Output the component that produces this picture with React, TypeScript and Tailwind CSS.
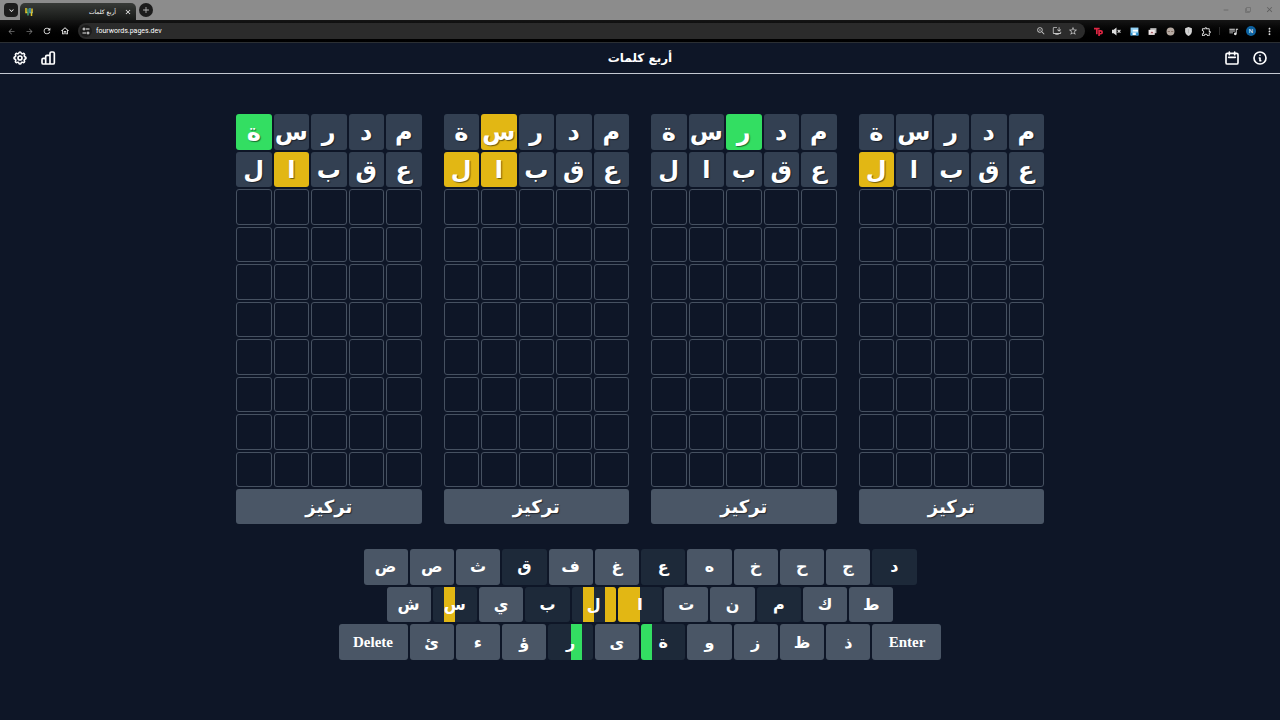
import type { ReactNode } from "react";
import {
  HiOutlineCalendar,
  HiOutlineCog,
  HiOutlineInformationCircle,
} from "react-icons/hi";
import {
  MdAdd,
  MdArrowBack,
  MdArrowForward,
  MdClose,
  MdFilterNone,
  MdKeyboardArrowDown,
  MdMoreVert,
  MdOutlineExtension,
  MdOutlineHome,
  MdOutlineInstallDesktop,
  MdQueueMusic,
  MdRefresh,
  MdRemove,
  MdStarBorder,
  MdZoomIn,
} from "react-icons/md";

type Mark = "absent" | "present" | "correct";

const markClass: Record<Mark, string> = {
  absent: "bg-[#334052]",
  present: "bg-[#e2b714]",
  correct: "bg-[#33de62]",
};

const guesses = [
  ["م", "د", "ر", "س", "ة"],
  ["ع", "ق", "ب", "ا", "ل"],
];

const A: Mark = "absent";
const P: Mark = "present";
const C: Mark = "correct";

const boards: Mark[][][] = [
  [[A, A, A, A, C], [A, A, A, P, A]],
  [[A, A, A, P, A], [A, A, A, P, P]],
  [[A, A, C, A, A], [A, A, A, A, A]],
  [[A, A, A, A, A], [A, A, A, A, P]],
];

const keyRows = [
  { width: "max-w-[553px]", letters: ["ض", "ص", "ث", "ق", "ف", "غ", "ع", "ه", "خ", "ح", "ج", "د"] },
  { width: "max-w-[507px]", letters: ["ش", "س", "ي", "ب", "ل", "ا", "ت", "ن", "م", "ك", "ط"] },
  { width: "max-w-[603px]", letters: ["ئ", "ء", "ؤ", "ر", "ى", "ة", "و", "ز", "ظ", "ذ"] },
];

const keyMarks: Record<string, Mark[]> = {
  س: [A, P, A, A],
  ل: [A, P, A, P],
  ا: [P, P, A, A],
  ر: [A, A, C, A],
  ة: [C, A, A, A],
};

const usedLetters = new Set(guesses.flat());
const emptyCells = Array.from({ length: 40 }, (_, i) => i);

function IconButton({ label, className, children }: { label: string; className?: string; children: ReactNode }) {
  return (
    <button type="button" aria-label={label} className={`flex shrink-0 items-center justify-center ${className ?? ""}`}>
      {children}
    </button>
  );
}

function TabStrip() {
  return (
    <div className="flex h-5 items-end bg-[#8c8c8c] px-1">
      <IconButton label="Search tabs" className="mb-[3px] size-[14px] rounded-[4px] bg-[#1c1c1c] text-white">
        <MdKeyboardArrowDown size={9} />
      </IconButton>
      <div className="ml-[2px] flex h-[17px] w-[116px] items-center rounded-t-[5px] bg-linear-to-b from-[#383b38] to-[#171917] pr-1 pl-[5px] text-white">
        <svg viewBox="0 0 16 16" className="size-2" fill="none" strokeWidth="3" aria-hidden="true">
          <path d="M2 0v9h4" stroke="#e2c52a" />
          <path d="M6 1v14" stroke="#3f9f78" />
          <path d="M10 0v9h6" stroke="#4a9dc4" />
          <path d="M14 1v8M13 9v7" stroke="#e2c52a" />
        </svg>
        <span dir="rtl" className="flex-1 pr-2 font-['DejaVu_Sans',sans-serif] text-[6px] leading-none">
          أربع كلمات
        </span>
        <IconButton label="Close tab" className="size-2">
          <MdClose size={8} />
        </IconButton>
      </div>
      <IconButton label="New tab" className="mb-[3px] ml-[3px] size-[14px] rounded-full bg-[#1c1c1c] text-[#b8b8b8]">
        <MdAdd size={10} />
      </IconButton>
      <div className="mb-[6px] ml-auto flex w-[54px] items-center justify-between pr-[2px] text-[#5c5c5c]">
        <IconButton label="Minimize"><MdRemove size={8} /></IconButton>
        <IconButton label="Restore"><MdFilterNone size={6} /></IconButton>
        <IconButton label="Close window"><MdClose size={9} /></IconButton>
      </div>
    </div>
  );
}

function Extensions() {
  return (
    <div className="ml-1 flex items-center text-[#dedede]">
      <IconButton label="Tampermonkey" className="h-4 w-[18px] text-[#e02643]">
        <svg viewBox="0 0 16 16" className="size-[9px]" fill="none" stroke="currentColor" strokeWidth="3" aria-hidden="true">
          <path d="M0 3h10M5 3v10M9 16V7h3a2.500 2.500 0 0 1 0 5H9" />
        </svg>
      </IconButton>
      <IconButton label="Muted" className="h-4 w-[18px]">
        <svg viewBox="0 0 16 16" className="size-[9px]" fill="none" stroke="currentColor" strokeWidth="2" aria-hidden="true">
          <path d="M1 6h2l4-3v10l-4-3H1z" fill="currentColor" />
          <path d="M10 5l5 5M15 5l-5 5" />
        </svg>
      </IconButton>
      <IconButton label="Capture" className="h-4 w-[18px]">
        <svg viewBox="0 0 16 16" className="size-[9px]" aria-hidden="true">
          <path d="M1 1h14v14H1z" fill="#8fd0f5" />
          <path d="M5 5h9v3H5zM5 10h5v4H5z" fill="#ffffff" />
          <path d="M1 10h3v5H1zM11 10h4v5h-4z" fill="#2d8fd0" />
        </svg>
      </IconButton>
      <IconButton label="Image tool" className="h-4 w-[18px]">
        <svg viewBox="0 0 16 16" className="size-[9px]" aria-hidden="true">
          <path d="M4 2h11v9H4z" fill="#b9b9b9" />
          <path d="M1 5h11v9H1z" fill="#f0e9e9" />
          <path d="M4 11l3-3 3 3z" fill="#9c4b54" />
        </svg>
      </IconButton>
      <IconButton label="Assistant" className="h-4 w-[18px]">
        <svg viewBox="0 0 16 16" className="size-[9px]" aria-hidden="true">
          <circle cx="8" cy="8" r="7" fill="#b6aaa2" />
          <path d="M3 7h4v2H3zM9 7h4v2H9z" fill="#8a756b" />
        </svg>
      </IconButton>
      <IconButton label="Privacy shield" className="h-4 w-[18px]">
        <svg viewBox="0 0 16 16" className="size-[9px]" aria-hidden="true">
          <path d="M8 0l6 2v6c0 4-3 6-6 8-3-2-6-4-6-8V2z" fill="#d3d3d3" />
          <path d="M8 4v7" stroke="#b5b5b5" strokeWidth="2" />
        </svg>
      </IconButton>
      <IconButton label="Extensions" className="h-4 w-[18px]">
        <MdOutlineExtension size={11} />
      </IconButton>
      <span className="mx-[4px] h-2 w-px bg-[#2c2c2c]" />
      <IconButton label="Media controls" className="h-4 w-[18px]"><MdQueueMusic size={11} /></IconButton>
      <IconButton label="Profile" className="h-4 w-[18px]">
        <span className="flex size-[10px] items-center justify-center rounded-full bg-[#0d62a0] font-['Roboto',sans-serif] text-[6px] leading-none text-white">N</span>
      </IconButton>
      <IconButton label="Browser menu" className="h-4 w-[18px]"><MdMoreVert size={11} /></IconButton>
    </div>
  );
}

function Toolbar() {
  return (
    <div className="flex h-[23px] items-center border-b border-[#2b2f33] bg-linear-to-b from-[#151515] to-black px-[2px]">
      <div className="flex text-[#f0f0f0]">
        <IconButton label="Back" className="h-4 w-[18px] text-[#777]"><MdArrowBack size={9} /></IconButton>
        <IconButton label="Forward" className="h-4 w-[18px] text-[#777]"><MdArrowForward size={9} /></IconButton>
        <IconButton label="Reload" className="h-4 w-[18px]"><MdRefresh size={10} className="stroke-current" /></IconButton>
        <IconButton label="Home" className="h-4 w-[18px]"><MdOutlineHome size={10} className="stroke-current" /></IconButton>
      </div>
      <div className="ml-1 flex h-4 flex-1 items-center rounded-full bg-[#2b2b2b] pr-1 pl-[2px] text-[#c6c6c6]">
        <IconButton label="Site information" className="size-3 rounded-full bg-[#1b1b1b]">
          <svg viewBox="0 0 16 16" className="size-2" fill="none" stroke="#eee" strokeWidth="2" aria-hidden="true">
            <path d="M8 4h7M1 12h7" />
            <circle cx="4" cy="4" r="2" />
            <circle cx="12" cy="12" r="2" />
          </svg>
        </IconButton>
        <input
          aria-label="Address"
          readOnly
          value="fourwords.pages.dev"
          className="ml-1 min-w-0 flex-1 bg-transparent font-['Roboto',sans-serif] text-[7px] leading-none text-white outline-none"
        />
        <IconButton label="Zoom" className="w-4"><MdZoomIn size={10} /></IconButton>
        <IconButton label="Install app" className="w-4"><MdOutlineInstallDesktop size={10} /></IconButton>
        <IconButton label="Bookmark" className="w-4"><MdStarBorder size={10} /></IconButton>
      </div>
      <Extensions />
    </div>
  );
}

function Board({ marks }: { marks: Mark[][] }) {
  return (
    <section dir="rtl" className="grid grid-cols-5 gap-[2px]">
      {guesses.map((word, row) =>
        word.map((letter, col) => (
          <div
            key={`${row}-${col}`}
            className={`flex aspect-square items-center justify-center rounded-[3px] pt-px text-2xl leading-none font-bold text-shadow-[1px_1px_1px_rgb(0_0_0/0.5)] ${markClass[marks[row][col]]}`}
          >
            {letter}
          </div>
        )),
      )}
      {emptyCells.map((i) => (
        <div key={i} className="aspect-square rounded-[3px] border border-[#465161]" />
      ))}
      <button
        type="button"
        className="col-span-5 flex h-[35px] items-center justify-center rounded-[3px] bg-[#4a5666] text-lg leading-none font-bold text-shadow-[1px_1px_1px_rgb(0_0_0/0.5)]"
      >
        تركيز
      </button>
    </section>
  );
}

function LetterKey({ letter }: { letter: string }) {
  const marks = keyMarks[letter];
  return (
    <button
      type="button"
      className={`relative flex flex-1 items-center justify-center overflow-hidden rounded-[3px] pt-px ${usedLetters.has(letter) ? "bg-[#1d2939]" : "bg-[#4a5666]"}`}
    >
      {marks && (
        <span className="absolute inset-0 grid grid-cols-4">
          {marks.map((mark, i) => (
            <span key={i} className={mark === "absent" ? "" : markClass[mark]} />
          ))}
        </span>
      )}
      <span className="relative">{letter}</span>
    </button>
  );
}

function WideKey({ label }: { label: string }) {
  return (
    <button type="button" className="w-[69px] rounded-[3px] bg-[#4a5666] font-['Liberation_Serif',serif] text-[15px]">
      {label}
    </button>
  );
}

export default function App() {
  return (
    <div className="flex min-h-screen flex-col bg-[#0e1627] font-['DejaVu_Sans',sans-serif] text-white">
      <TabStrip />
      <Toolbar />
      <header className="flex h-[31px] items-center justify-between border-b border-[#c3c8d2] px-3 [&_path]:[stroke-width:2.5]">
        <div className="flex w-24 gap-3">
          <IconButton label="الإعدادات"><HiOutlineCog size={16} /></IconButton>
          <IconButton label="الإحصائيات">
            <svg viewBox="0 0 24 24" className="size-4" fill="none" stroke="currentColor" strokeLinejoin="round" aria-hidden="true">
              <path d="M8.500 21V14.500a2 2 0 0 0-2-2H5a2 2 0 0 0-2 2V19a2 2 0 0 0 2 2zM8.500 21V10a2 2 0 0 1 2-2H15v13zM15 21V5a2 2 0 0 1 2-2h2.500a2 2 0 0 1 2 2v14a2 2 0 0 1-2 2z" />
            </svg>
          </IconButton>
        </div>
        <h1 dir="rtl" className="text-xs leading-none font-bold">أربع كلمات</h1>
        <div className="flex w-24 justify-end gap-3">
          <IconButton label="التقويم"><HiOutlineCalendar size={16} /></IconButton>
          <IconButton label="معلومات"><HiOutlineInformationCircle size={16} /></IconButton>
        </div>
      </header>
      <main className="flex flex-1 flex-col items-center pt-10">
        <div className="grid w-full max-w-[808px] grid-cols-4 gap-[22px]">
          {boards.map((marks, i) => (
            <Board key={i} marks={marks} />
          ))}
        </div>
        <div className="mt-[25px] flex h-[111px] w-full flex-col items-center gap-[2px] text-base leading-none font-bold text-shadow-[1px_1px_1px_rgb(0_0_0/0.3)]">
          {keyRows.map((row, i) => (
            <div key={i} className={`flex w-full flex-1 gap-[2px] ${row.width}`}>
              {i === 2 && <WideKey label="Delete" />}
              {row.letters.map((letter) => (
                <LetterKey key={letter} letter={letter} />
              ))}
              {i === 2 && <WideKey label="Enter" />}
            </div>
          ))}
        </div>
      </main>
    </div>
  );
}
